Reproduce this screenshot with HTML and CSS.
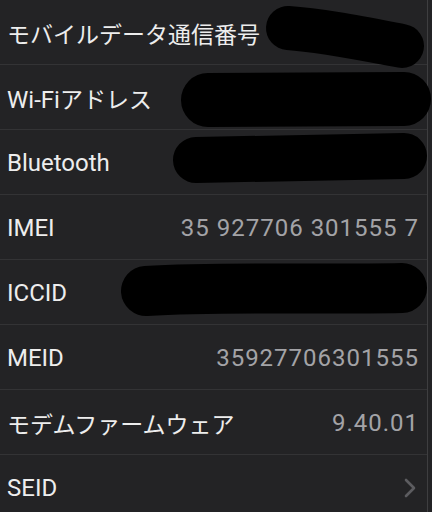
FILE: index.html
```html
<!DOCTYPE html>
<html lang="ja">
<head>
<meta charset="utf-8">
<link rel="stylesheet" href="styles.css">
</head>
<body>
<div class="screen">
  <ul class="list">
    <li class="row"><span class="label"><span class="jp">モバイルデータ通信番号</span></span><span class="value"></span></li>
    <li class="row"><span class="label">Wi-Fi<span class="jp">アドレス</span></span><span class="value"></span></li>
    <li class="row"><span class="label">Bluetooth</span><span class="value"></span></li>
    <li class="row"><span class="label">IMEI</span><span class="value">35 927706 301555 7</span></li>
    <li class="row"><span class="label">ICCID</span><span class="value"></span></li>
    <li class="row"><span class="label">MEID</span><span class="value">35927706301555</span></li>
    <li class="row"><span class="label"><span class="jp">モデムファームウェア</span></span><span class="value">9.40.01</span></li>
    <li class="row"><span class="label">SEID</span>
      <svg class="chevron" width="12" height="20" viewBox="0 0 12 20"><path d="M2 2 L10 10 L2 18" fill="none" stroke="#5c5c60" stroke-width="2.6" stroke-linecap="round" stroke-linejoin="round"/></svg>
    </li>
  </ul>
  <svg class="redact" width="432" height="512" viewBox="0 0 432 512">
    <g stroke="#000" stroke-linecap="round" fill="none">
      <path d="M288 28 C320 30 360 38 402 46" stroke-width="44"/>
      <path d="M208 100 L404 99" stroke-width="54"/>
      <path d="M196 160 L404 156" stroke-width="46"/>
      <path d="M146 291 C220 286 300 290 402 288" stroke-width="50"/>
    </g>
  </svg>
</div>
</body>
</html>
```
FILE: styles.css
```css
html, body {
  margin: 0;
  padding: 0;
  background: #1c1c1e;
}
.screen {
  position: relative;
  width: 432px;
  height: 512px;
  overflow: hidden;
  background: #232325;
}
.list {
  list-style: none;
  margin: 0;
  padding: 0;
  width: 427px;
  border-right: 1px solid #3e3e40;
  height: 512px;
}
.row {
  display: flex;
  align-items: center;
  justify-content: space-between;
  box-sizing: border-box;
  height: 65px;
  padding: 2px 9px 0 7px;
  border-bottom: 1px solid #333335;
  font-family: Roboto, "Noto Sans CJK JP", sans-serif;
  font-size: 24px;
}
.label {
  color: #ededed;
}
.jp {
  font-family: "Noto Sans CJK JP", sans-serif;
  font-size: 23px;
}
.value {
  color: #a3a3a7;
  letter-spacing: 1px;
  margin-right: -1px;
}
.chevron {
  margin-right: 2px;
}
.redact {
  position: absolute;
  left: 0;
  top: 0;
  pointer-events: none;
}
```
